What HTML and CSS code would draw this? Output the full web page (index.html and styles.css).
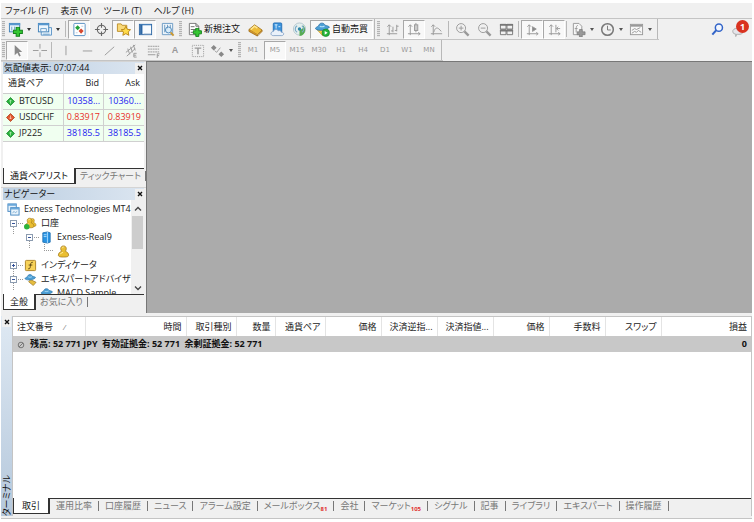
FILE: index.html
```html
<!DOCTYPE html>
<html lang="ja">
<head>
<meta charset="utf-8">
<title>MetaTrader 4</title>
<link rel="stylesheet" href="styles.css">
</head>
<body>
<svg class="defs" aria-hidden="true">
  <symbol id="plus" viewBox="0 0 8 8"><path d="M2.7.5h2.6v2.2h2.2v2.6H5.300v2.200H2.700V5.300H.5V2.700h2.200z" fill="#35c832" stroke="#14831c" stroke-width=".8"/></symbol>
  <symbol id="up" viewBox="0 0 9 9"><path d="M4.500.5l4 4-4 4-4-4z" fill="#26b03a" stroke="#16802a" stroke-width=".7"/><path d="M4.500 6.500V3M3.200 4.300l1.300-1.300 1.300 1.300" fill="none" stroke="#c0f5c0" stroke-width=".7"/></symbol>
  <symbol id="down" viewBox="0 0 9 9"><path d="M4.500.5l4 4-4 4-4-4z" fill="#e0562c" stroke="#a83412" stroke-width=".7"/><path d="M4.500 2.500V6M3.200 4.700l1.300 1.300 1.300-1.300" fill="none" stroke="#ffd3c0" stroke-width=".7"/></symbol>
  <symbol id="windows" viewBox="0 0 14 14"><rect x="1" y="1" width="9" height="8" fill="#e4f0fa" stroke="#4486c0"/><path d="M1 2h9" stroke="#6aa8da" stroke-width="2"/><rect x="4" y="5" width="9" height="8" fill="#e9f4fc" stroke="#4486c0"/><path d="M4 6h9" stroke="#6aa8da" stroke-width="2"/><path d="M6 11l1.500-2 1.500 1.500L11 9" fill="none" stroke="#6ba0cb" stroke-width=".8"/></symbol>
  <symbol id="person" viewBox="0 0 14 14"><path d="M7 1c2 0 3 1.300 3 3 0 1.200-.6 2.100-1 2.800 2.200.8 3.500 2 3.500 4.200 0 1.400-1.500 2-5.500 2s-5.500-.6-5.500-2c0-2.200 1.300-3.400 3.500-4.200C4.600 6.100 4 5.200 4 4c0-1.700 1-3 3-3z" fill="#eabe32" stroke="#a1771a" stroke-width=".8"/><path d="M5.500 3.500c.3-1 1-1.300 1.800-1.300M3.500 10c.5-1.200 1.500-1.800 3-2" fill="none" stroke="#fff1a8"/></symbol>
  <symbol id="hat" viewBox="0 0 14 14"><path d="M1 6.500C2 4.800 4 5 4.500 3.200 5 1.500 8.300 1.300 9.200 3c.6 1.200 2.900.8 4.300 2.200C12 8 3.500 9.500 1 6.500z" fill="#4c9fd5" stroke="#286fa5" stroke-width=".7"/><path d="M5 4.500c1.300.7 3 .5 4.200-.2" fill="none" stroke="#b5e1fa"/></symbol>
</svg>

<div class="app">
  <nav class="menu" aria-label="メニュー">
    <button>ファイル (F)</button><button>表示 (V)</button><button>ツール (T)</button><button>ヘルプ (H)</button>
  </nav>

  <div class="toolbar">
    <div class="group">
      <i class="grip"></i>
      <button class="tool drop" aria-label="新規チャート"><svg viewBox="0 0 16 16"><rect x="1.500" y="1.500" width="11" height="9" fill="#e8f3fb" stroke="#3f7fb6"/><path d="M1 2.500h12" stroke="#5798cf" stroke-width="2"/><path d="M4 5v4M7 5v4" stroke="#6ba0cb"/><use href="#plus" x="5" y="5" width="11" height="11"/></svg></button>
      <button class="tool drop" aria-label="プロファイル"><svg viewBox="0 0 16 16"><path d="M4.500 5v9h11V6h-3" fill="#e8f3fb" stroke="#5a93c5"/><rect x="1.500" y="1.500" width="11" height="9" fill="#edf6fd" stroke="#3f7fb6"/><path d="M1 2.500h12" stroke="#5798cf" stroke-width="2"/><path d="M4 10V7h6v3M6.500 13h7" fill="none" stroke="#6ba0cb"/></svg></button>
      <i class="sep"></i>
      <button class="tool on" aria-label="気配値"><svg viewBox="0 0 16 16"><rect x="2" y="1.500" width="12" height="13" rx="1" fill="#fff" stroke="#568fc3"/><path d="M6 3.500l2.700 2.700L6 8.900 3.300 6.200z" fill="#23a23a"/><path d="M9.700 7l2.700 2.700-2.700 2.700L7 9.700z" fill="#d7492f"/><path d="M10 4.500h2M4 11.500h2" stroke="#b7cbe0"/></svg></button>
      <button class="tool" aria-label="データウィンドウ"><svg viewBox="0 0 16 16"><circle cx="8" cy="8" r="4.500" fill="none" stroke="#666" stroke-width="1.200"/><path d="M8 1v5M8 10v5M1 8h5M10 8h5" stroke="#666" stroke-width="1.200"/></svg></button>
      <button class="tool on" aria-label="ナビゲーター"><svg viewBox="0 0 16 16"><path d="M1.500 10V2h4l1 1.500h5V10z" fill="#f9d978" stroke="#bd902b"/><path d="M10.500 4.500l1.600 3.300 3.400.4-2.500 2.400.7 3.600-3.200-1.800-3.200 1.800.7-3.600L5.500 8.200l3.400-.4z" fill="#ffdb4a" stroke="#b88416"/></svg></button>
      <button class="tool on" aria-label="ターミナル"><svg viewBox="0 0 16 16"><rect x="1.500" y="2.500" width="13" height="11" fill="#f7fbff" stroke="#2c66a4"/><path d="M2 3h12" stroke="#3f7dbd"/><path d="M3.500 3v10" stroke="#2c66a4" stroke-width="2.500"/><path d="M6 12.500h8" stroke="#b4c8dc"/></svg></button>
      <button class="tool" aria-label="ストラテジーテスター"><svg viewBox="0 0 16 16"><path d="M2.500 1.500h11v12h-11z" fill="#edf5fb" stroke="#6c9bc4"/><path d="M5 3v8M8 3v5M11 3v3" stroke="#6f9abf"/><circle cx="9" cy="8.500" r="3.200" fill="#d5ebfa" fill-opacity=".8" stroke="#4783b8"/><path d="M11.300 11l3.200 3.500" stroke="#ca9731" stroke-width="2"/></svg></button>
      <i class="grip"></i>
      <button class="tool order"><svg viewBox="0 0 16 16"><path d="M2.500 1.500h7l3 3v9h-10z" fill="#fff" stroke="#777"/><path d="M9.500 1.500v3h3M4 5h4M4 8h6M4 11h4" fill="none" stroke="#666"/><use href="#plus" x="6" y="6" width="10" height="10"/></svg>新規注文</button>
      <button class="tool" aria-label="メタエディター"><svg viewBox="0 0 16 16"><path d="M1 8l6-5 8 5.500-5 5z" fill="#edbb39" stroke="#9b6a16" stroke-width=".8"/><path d="M1 8v2l9 5v-1.500M10 15l5-5V8.500" fill="#d59524" stroke="#9b6a16" stroke-width=".8"/><path d="M3 8l4-3.500 3 2" stroke="#ffe996" stroke-width="1.500" fill="none"/></svg></button>
      <button class="tool" aria-label="仮想ホスティング"><svg viewBox="0 0 16 16"><rect x="3.500" y="1" width="9" height="10" rx="1" fill="#3b93dc" stroke="#2671b7"/><path d="M5 3h3M6.500 3v4M9 5h2" stroke="#d7efff"/><path d="M3.500 14.500c-3.500 0-3-4.500 0-4.300.7-2.800 4.500-2.800 5.200-.8 1.700-.8 3.300.2 3.200 1.500 3.600-.3 3.300 3.600.6 3.600z" fill="#eaf1fa" stroke="#7697c0" stroke-width=".8"/></svg></button>
      <button class="tool" aria-label="シグナル"><svg viewBox="0 0 16 16"><circle cx="8" cy="7.500" r="6.500" fill="#e5efee" stroke="#b5c8cf"/><path d="M8 8v7c4-.5 6-3 6-6.500 0-2-1-4-2.500-5 1 2.500 0 4.500-3.500 4.500z" fill="#56ac52"/><path d="M5.500 11a4 4 0 010-7M10.500 4a4 4 0 010 7" fill="none" stroke="#7aa9c9" stroke-width="1.200"/><circle cx="8" cy="7.500" r="1.800" fill="#2f86a8"/></svg></button>
      <button class="tool auto on"><svg viewBox="0 0 16 16"><path d="M2 8l6 6.500L13 8z" fill="#f0cb45" stroke="#b98f22" stroke-width=".7"/><use href="#hat" x="-1" y="-1" width="17" height="17"/><circle cx="11.500" cy="11.500" r="4" fill="#25b338" stroke="#16832a" stroke-width=".7"/><path d="M10.300 9.500l3.200 2-3.200 2z" fill="#fff"/></svg>自動売買</button>
      <i class="edge"></i>
    </div>
    <div class="group gray">
      <i class="grip"></i>
      <button class="tool" aria-label="バーチャート"><svg viewBox="0 0 16 16"><path d="M4.500 3v11M2.500 5l2-2 2 2M2 12.500h11M8.500 5v6M8.500 9.500h-2M12.500 3v7M12.500 4.500h2M12.500 9h-2"/></svg></button>
      <button class="tool on" aria-label="ローソク足"><svg viewBox="0 0 16 16"><path d="M3.500 3v11M1.500 5l2-2 2 2M1 12.500h13M12 11l2 1.500-2 1.500M9.500 1v10"/><rect x="8" y="3" width="3.500" height="6" fill="#ccc"/></svg></button>
      <button class="tool" aria-label="ラインチャート"><svg viewBox="0 0 16 16"><path d="M4.500 3v11M2.500 5l2-2 2 2M2 12.500h12M5 11c2-6 4-6 8-1"/></svg></button>
      <i class="sep"></i>
      <button class="tool" aria-label="ズームイン"><svg viewBox="0 0 16 16"><circle cx="6.500" cy="6.500" r="4.800"/><path d="M4 6.500h5M6.500 4v5"/><path d="M10 10l4.500 4.500" stroke-width="2.500"/></svg></button>
      <button class="tool" aria-label="ズームアウト"><svg viewBox="0 0 16 16"><circle cx="6.500" cy="6.500" r="4.800"/><path d="M4 6.500h5"/><path d="M10 10l4.500 4.500" stroke-width="2.500"/></svg></button>
      <button class="tool" aria-label="タイル表示"><svg viewBox="0 0 16 16"><path d="M1.500 2.500h6v5h-6zM8.500 2.500h6v5h-6zM1.500 8.500h6v5h-6zM8.500 8.500h6v5h-6z" stroke="#777"/><path d="M1 3h14M1 9h14" stroke="#777" stroke-width="2"/></svg></button>
      <i class="sep"></i>
      <button class="tool on" aria-label="チャートシフト"><svg viewBox="0 0 16 16"><path d="M4.500 3v11M2.500 5l2-2 2 2M2 12.500h12M12 11l2 1.500-2 1.500"/><path d="M8 5v5l4-2.500z" fill="#888"/></svg></button>
      <button class="tool on" aria-label="自動スクロール"><svg viewBox="0 0 16 16"><path d="M4.500 3v11M2.500 5l2-2 2 2M2 12.500h12M12 11l2 1.500-2 1.500M9.500 3v8M14 7h-4M12 5l-2 2 2 2"/></svg></button>
      <i class="sep"></i>
      <button class="tool drop" aria-label="インディケータ"><svg viewBox="0 0 16 16"><path d="M2.500 1.500h6l3 3v9h-9z" fill="#f7f7f7"/><path d="M7.500 4c-2-1-2 2-2 7M4 7h3"/><path d="M9 8h3v2.500h3v3h-3V16H9v-2.500H6.500v-3H9z" fill="#999" stroke="#777" stroke-width=".7"/></svg></button>
      <button class="tool drop" aria-label="時間足"><svg viewBox="0 0 16 16"><circle cx="8" cy="8" r="6.200" stroke="#777" stroke-width="1.600"/><path d="M8 4v4.500h3.500" stroke="#777"/></svg></button>
      <button class="tool drop" aria-label="テンプレート"><svg viewBox="0 0 16 16"><rect x="1.500" y="2.500" width="13" height="11" fill="#f7f7f7"/><path d="M2 4h12" stroke-width="2"/><path d="M3 9l3-2 2 1 4-2M3 12l3-2 2 1 2-2 3 2"/></svg></button>
      <i class="edge"></i>
    </div>
    <div class="side">
      <button class="tool" aria-label="検索"><svg viewBox="0 0 16 16"><circle cx="9.500" cy="6" r="3.800" fill="#f2f7ff" stroke="#3264c8" stroke-width="1.600"/><path d="M6.500 9L2.500 13.500" stroke="#3264c8" stroke-width="2.200"/></svg></button>
      <button class="tool chat" aria-label="通知"><svg viewBox="0 0 16 16"><path d="M1 9c2-4 11-3 11 1 0 3-4 3.500-7 3L4 15.500V13C1 12.500.5 11 1 9z" fill="#e5e5ea" stroke="#aaa"/></svg><b class="badge">1</b></button>
    </div>
  </div>

  <div class="toolbar">
    <div class="group gray">
      <i class="grip"></i>
      <button class="tool on" aria-label="カーソル"><svg viewBox="0 0 16 16"><path d="M5 2v11l2.800-2.500 2 4 1.700-.8-2-4H13z" fill="#888" stroke="none"/></svg></button>
      <button class="tool" aria-label="十字カーソル"><svg viewBox="0 0 16 16"><path d="M8.500 1v5M8.500 10v5M1 8h6M10 8h6"/></svg></button>
      <i class="sep"></i>
      <button class="tool" aria-label="垂直線"><svg viewBox="0 0 16 16"><path d="M8.500 3v10"/></svg></button>
      <button class="tool" aria-label="水平線"><svg viewBox="0 0 16 16"><path d="M3 8.500h10"/></svg></button>
      <button class="tool" aria-label="トレンドライン"><svg viewBox="0 0 16 16"><path d="M3 13L13 4"/></svg></button>
      <button class="tool" aria-label="チャネル"><svg viewBox="0 0 16 16"><path d="M2 10L12 2M3 14l9-8M4 6l2 6M7 4l2 6M10 2l2 6M13.500 11h-3v4h3M10.500 13H13"/></svg></button>
      <button class="tool" aria-label="フィボナッチ"><svg viewBox="0 0 16 16"><path d="M2 3.500h12M2 6.500h12M2 9.500h12" stroke-dasharray="2 .6"/><path d="M2 12.500h8M14.500 11.500h-2.500V16M12 13.500h2"/></svg></button>
      <button class="tool letter" aria-label="テキスト">A</button>
      <button class="tool" aria-label="テキストラベル"><svg viewBox="0 0 16 16"><rect x="2.500" y="2.500" width="12" height="12" stroke-dasharray="1 1"/><path d="M5 5.500h7M8.500 5v7" stroke-width="1.500"/></svg></button>
      <button class="tool drop" aria-label="矢印"><svg viewBox="0 0 16 16"><path d="M4 2l3 3-3 3-3-3zM12 9l3 3-3 3-3-3z" fill="#888" stroke="none"/><path d="M5 8l2 2 4-5"/></svg></button>
    </div>
    <div class="group periods">
      <i class="grip"></i>
      <button class="tool">M1</button><button class="tool on">M5</button><button class="tool">M15</button><button class="tool">M30</button><button class="tool">H1</button><button class="tool">H4</button><button class="tool">D1</button><button class="tool">W1</button><button class="tool">MN</button>
      <i class="edge"></i>
    </div>
  </div>

  <div class="work">
    <aside class="docks">
      <section class="panel watch">
        <header class="caption"><span>気配値表示: 07:07:44</span><button class="close" aria-label="閉じる"><svg viewBox="0 0 6 6"><path d="M1 1l4 4M5 1L1 5"/></svg></button></header>
        <div class="body">
          <table class="quotes">
            <thead><tr><th class="sym">通貨ペア</th><th>Bid</th><th>Ask</th></tr></thead>
            <tbody>
              <tr class="rise"><td class="sym"><svg><use href="#up"/></svg>BTCUSD</td><td>10358...</td><td>10360...</td></tr>
              <tr class="fall"><td class="sym"><svg><use href="#down"/></svg>USDCHF</td><td>0.83917</td><td>0.83919</td></tr>
              <tr class="rise"><td class="sym"><svg><use href="#up"/></svg>JP225</td><td>38185.5</td><td>38185.5</td></tr>
            </tbody>
          </table>
        </div>
        <div class="tabs"><button class="tab active">通貨ペアリスト</button><button class="tab">ティックチャート</button></div>
      </section>
      <section class="panel navigator">
        <header class="caption"><span>ナビゲーター</span><button class="close" aria-label="閉じる"><svg viewBox="0 0 6 6"><path d="M1 1l4 4M5 1L1 5"/></svg></button></header>
        <div class="body split">
          <ul class="tree">
            <li><svg><use href="#windows"/></svg>Exness Technologies MT4</li>
            <li class="l1"><i class="box"></i><svg viewBox="0 0 14 14"><use href="#person" x="4" y="0" width="10" height="12"/><use href="#person" x="0" y="0" width="12" height="13"/><circle cx="3" cy="10.500" r="3" fill="#2cb33d"/></svg>口座</li>
            <li class="l2"><i class="box"></i><svg viewBox="0 0 14 14"><path d="M3 2l5-1 3 1v10l-3 1-5-1z" fill="#2993e2" stroke="#1768ac" stroke-width=".8"/><path d="M8 1v12M4 4h3M4 6h3" stroke="#a9dcff"/></svg>Exness-Real9</li>
            <li class="l3"><i class="elbow"></i><svg><use href="#person"/></svg></li>
            <li class="l1"><i class="box more"></i><svg viewBox="0 0 14 14"><rect x="1.500" y="1.500" width="11" height="11" rx="1" fill="#f7d259" stroke="#ad8325"/><path d="M9.500 3.500C7 3 7 6 6.800 8c-.2 2-.8 3-2.300 2.500M5 6.500h4" fill="none" stroke="#594313"/></svg>インディケータ</li>
            <li class="l1"><i class="box"></i><svg viewBox="0 0 14 14"><path d="M7 7l6 3-3 3.500-5-4z" fill="#e6bd3e" stroke="#967221" stroke-width=".7"/><use href="#hat" x="0" y="0" width="13" height="13"/></svg>エキスパートアドバイザ</li>
            <li class="l2 leaf"><svg><use href="#hat"/></svg>MACD Sample</li>
          </ul>
          <div class="scroll"><svg viewBox="0 0 8 6"><path d="M1 4.500l3-3 3 3"/></svg><i></i><svg viewBox="0 0 8 6"><path d="M1 1.500l3 3 3-3"/></svg></div>
        </div>
        <div class="tabs"><button class="tab active">全般</button><button class="tab">お気に入り</button></div>
      </section>
    </aside>
    <main class="canvas"></main>
  </div>

  <section class="terminal">
    <div class="spine"><button class="close" aria-label="閉じる"><svg viewBox="0 0 6 6"><path d="M1 1l4 4M5 1L1 5"/></svg></button><span>ターミナル</span></div>
    <div class="pane">
      <div class="sheet">
        <table class="trades">
          <colgroup><col class="c72"><col class="c101"><col class="c50"><col class="c39"><col class="c50"><col class="c56"><col class="c56"><col class="c56"><col class="c56"><col class="c56"><col class="c56"><col></colgroup>
          <thead><tr><th class="first">注文番号<i>/</i></th><th>時間</th><th>取引種別</th><th>数量</th><th>通貨ペア</th><th>価格</th><th>決済逆指...</th><th>決済指値...</th><th>価格</th><th>手数料</th><th>スワップ</th><th>損益</th></tr></thead>
          <tbody><tr><td colspan="11"><svg viewBox="0 0 8 8"><circle cx="4" cy="4" r="2.800"/><path d="M2 6l4-4"/></svg>残高: 52 771 JPY&ensp;有効証拠金: 52 771&ensp;余剰証拠金: 52 771</td><td class="num">0</td></tr></tbody>
        </table>
      </div>
      <div class="tabs wide"><button class="tab active">取引</button><button class="tab">運用比率</button><button class="tab">口座履歴</button><button class="tab">ニュース</button><button class="tab">アラーム設定</button><button class="tab">メールボックス<sub>81</sub></button><button class="tab">会社</button><button class="tab">マーケット<sub>105</sub></button><button class="tab">シグナル</button><button class="tab">記事</button><button class="tab">ライブラリ</button><button class="tab">エキスパート</button><button class="tab">操作履歴</button></div>
    </div>
  </section>
</div>
</body>
</html>
```
FILE: styles.css
```css
* { box-sizing: border-box; }

body {
  margin: 0;
  background: #fff;
  color: #222;
  font: 9px/14px "Open Sans", "Noto Sans CJK JP", sans-serif;
  font-feature-settings: "palt";
}

button {
  margin: 0;
  padding: 0;
  border: 0;
  background: none;
  color: inherit;
  font: inherit;
  font-feature-settings: inherit;
  white-space: nowrap;
}

svg { display: block; flex: none; }
.defs { position: absolute; width: 0; height: 0; }

.app {
  display: flex;
  flex-direction: column;
  height: 100vh;
  min-height: 480px;
  padding: 3px 2px 3px 1px;
}

/* menu */
.menu {
  display: flex;
  gap: 12px;
  height: 16px;
  padding: 0 4px;
  background: #f0f0f0;
  border-bottom: 1px solid #c4c4c4;
}

/* toolbars */
.toolbar {
  display: flex;
  height: 21px;
  background: #f0f0f0;
}

.group {
  display: flex;
  align-items: center;
  height: 21px;
  border-bottom: 1px solid #c4c4c4;
}

.grip {
  width: 3px;
  height: 16px;
  margin: 0 1px;
  background: repeating-linear-gradient(#b4b4b4 0 1px, #e4e4e4 1px 2px);
}

.sep { width: 1px; height: 16px; margin: 0 2px 0 1px; background: #b8b8b8; }
.edge { width: 1px; height: 20px; margin: 0 1px; background: #b8b8b8; }

.tool {
  display: flex;
  align-items: center;
  justify-content: center;
  width: 22px;
  height: 19px;
}

.tool svg { width: 15px; height: 15px; }
.tool.on { background: #f8f8f8; border: 1px solid; border-color: #a8a8a8 #fff #fff #a8a8a8; }
.drop { justify-content: flex-start; gap: 4px; width: 29px; padding-left: 2px; }
.drop::after { content: ""; border: 2px solid transparent; border-top: 3px solid #333; border-bottom: 0; }
.tool.order { width: 61px; gap: 2px; color: #111; }
.tool.auto { width: 63px; gap: 2px; color: #111; }
.gray svg { fill: none; stroke: #999; }
.gray .drop::after { border-top-color: #555; }
.letter { color: #999; font: bold 9px/14px "Liberation Sans", sans-serif; }
.periods .tool { color: #999; font: 7px/14px "DejaVu Sans", sans-serif; }

.side { display: flex; align-items: center; margin-left: auto; padding-right: 2px; }
.chat { position: relative; }
.badge {
  position: absolute;
  top: 0;
  right: 1px;
  width: 13px;
  height: 13px;
  border-radius: 50%;
  background: #d9321f;
  color: #fff;
  font-size: 9px;
  line-height: 13px;
}

/* docked panels */
.work { display: flex; flex: none; }
.docks { display: flex; flex-direction: column; flex: none; width: 145px; background: #f0f0f0; }
.canvas { flex: 1; background: #ababab; border: 1px solid #777; border-width: 1px 0 0 1px; }
.panel { display: flex; flex-direction: column; height: 126px; padding: 0 2px 3px; border-top: 1px solid #d4d4d4; }

.caption {
  display: flex;
  align-items: center;
  justify-content: space-between;
  height: 12px;
  padding-left: 1px;
  background: linear-gradient(90deg, #bccfe2, #dbe5f0);
  color: #111;
  line-height: 12px;
}

.close { display: flex; align-items: center; justify-content: center; width: 9px; height: 11px; background: #f0f0f0; }
.close svg { width: 6px; height: 6px; stroke: #111; stroke-width: 1.4; }
.body { flex: 1; min-height: 0; overflow: hidden; background: #fff; }

table { width: 100%; border-collapse: collapse; table-layout: fixed; background: #fff; }
th, td { padding: 0 3px; font-weight: normal; text-align: right; white-space: nowrap; }

.quotes th { height: 19px; padding-right: 4px; border-right: 1px solid #e0e0e0; border-bottom: 1px solid #ccc; }
.quotes td { height: 16px; background: #f0fff0; border-right: 1px solid #d0d0d0; border-bottom: 1px solid #d0d0d0; }
.quotes th:last-child, .quotes td:last-child { border-right: 0; }
.quotes th.sym { width: 60px; padding-left: 5px; text-align: left; }
.quotes td.sym { padding-left: 16px; text-align: left; color: #222; }
.quotes svg { float: left; width: 9px; height: 9px; margin: 3px 0 0 -13px; }
.rise { color: #2222f0; }
.fall { color: #e8302a; }

/* tabs */
.tabs { display: flex; height: 16px; border-top: 1px solid #333; background: #f0f0f0; }
.tab { display: flex; align-items: center; height: 14px; padding-left: 4px; color: #777; }
.tab:not(.active)::after { content: ""; width: 1px; height: 10px; margin-left: 4px; background: #777; }
.tab.active {
  height: 16px;
  margin-top: -1px;
  padding: 0 6px;
  background: #fff;
  border: 1px solid #333;
  border-width: 0 2px 1px 1px;
  color: #111;
}
.tab sub { align-self: flex-end; color: #e03030; font: bold 6px/8px "Open Sans", sans-serif; }
.wide { height: 18px; padding-bottom: 2px; }
.wide .tab { padding-left: 6px; }
.wide .tab:not(.active)::after { margin-left: 6px; }
.wide .tab.active { padding: 0 8px; }

/* navigator tree */
.split { display: flex; }
.tree { flex: 1; min-width: 0; margin: 0; padding: 2px 0 0 4px; list-style: none; overflow: hidden; }
.tree li { display: flex; align-items: center; gap: 4px; height: 14px; white-space: nowrap; }
.tree svg { width: 13px; height: 13px; }
.tree .l1 { padding-left: 3px; }
.tree .l2 { padding-left: 19px; }
.tree .l3 { padding-left: 37px; }
.tree .leaf { padding-left: 33px; }

.box {
  position: relative;
  width: 7px;
  height: 7px;
  margin-right: 3px;
  border: 1px solid #8c9cb0;
  background: linear-gradient(#36549a, #36549a) center / 3px 1px no-repeat #fff;
}
.box::after { content: ""; position: absolute; top: 2px; left: 7px; width: 5px; border-top: 1px dotted #999; }
.box::before { content: ""; position: absolute; top: 6px; left: 2px; height: 7px; border-left: 1px dotted #999; }
.box.more {
  background:
    linear-gradient(#36549a, #36549a) center / 3px 1px no-repeat,
    linear-gradient(#36549a, #36549a) center / 1px 3px no-repeat #fff;
}
.elbow { width: 9px; height: 7px; margin-bottom: 7px; border: dotted #999; border-width: 0 0 1px 1px; }

.scroll {
  display: flex;
  flex-direction: column;
  align-items: center;
  width: 13px;
  padding: 6px 0 3px;
  background: #f0f0f0;
}
.scroll svg { width: 8px; height: 6px; fill: none; stroke: #444; stroke-width: 1.3; }
.scroll i { width: 11px; height: 33px; margin: 4px 0 auto; background: #cdcdcd; }

/* terminal */
.terminal { display: flex; flex: 1; min-height: 0; padding: 3px 0 2px; background: #f0f0f0; border-bottom: 1px solid #c4c4c4; }
.spine {
  display: flex;
  flex-direction: column;
  align-items: center;
  justify-content: space-between;
  width: 11px;
  background: linear-gradient(#dfe9f3, #b5c8dc);
}
.spine span { color: #111; line-height: 11px; writing-mode: vertical-rl; transform: rotate(180deg); text-orientation: sideways; }
.pane { display: flex; flex: 1; flex-direction: column; min-width: 0; border: 1px solid #c4c4c4; border-bottom: 0; }
.sheet { flex: 1; min-height: 0; background: #fff; }
.c72 { width: 72px; }
.c101 { width: 101px; }
.c50 { width: 50px; }
.c39 { width: 39px; }
.c56 { width: 56px; }
.trades th { height: 19px; padding: 0 4px; border-right: 1px solid #e4e4e4; }
.trades th:last-child { border-right: 0; }
.trades th.first { text-align: left; }
.trades th i { margin-left: 10px; color: #888; font-size: 8px; }
.trades td { height: 16px; padding: 0 4px; background: #c8c8c8; color: #111; font-weight: bold; text-align: left; }
.trades td.num { text-align: right; }
.trades svg { float: left; width: 8px; height: 8px; margin: 4px 5px 0 0; fill: none; stroke: #777; }
```
